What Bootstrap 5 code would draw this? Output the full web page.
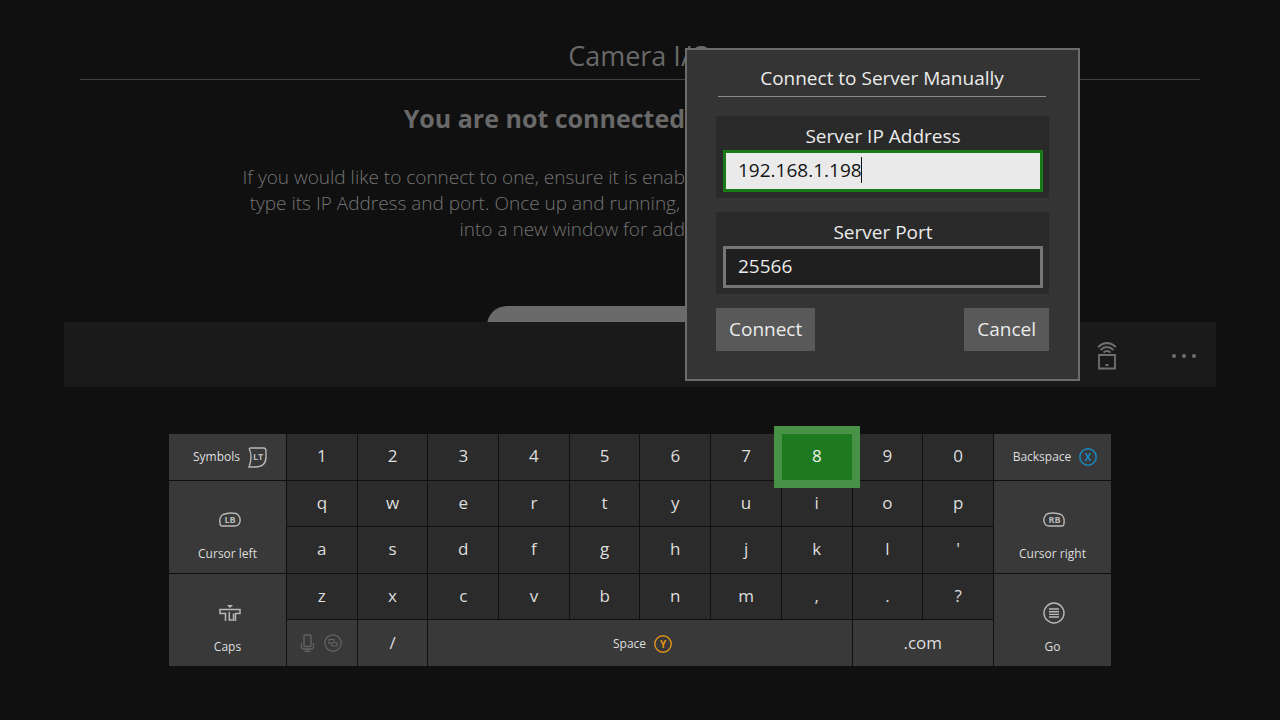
<!DOCTYPE html>
<html lang="en">
<head>
<meta charset="utf-8">
<meta name="viewport" content="width=device-width, initial-scale=1">
<title>Camera I/O</title>
<link href="https://cdn.jsdelivr.net/npm/bootstrap@5.3.0/dist/css/bootstrap.min.css" rel="stylesheet">
<style>
body{background:#101010;color:#696969;font-family:"Open Sans","Noto Sans",sans-serif;min-height:100vh}
.page-head{margin:0 80px;padding-top:36px;height:80px;border-bottom:1px solid #404040}
.page-head h1{font-size:27px;line-height:40px}
/* the text column stops at the dialog's left edge: 200px + 395px */
.intro{padding:21px 595px 0 0}
.intro h2{font-size:25px;line-height:34px;font-weight:700;color:#696969}
.intro p{font-size:19px;line-height:26px;font-weight:300;margin:29px 0 0;color:#747474}
.peek{height:16px;margin-top:64px}
.pill{width:306px;height:44px;background:#6a6a6a;border-radius:20px;border:0}
.tray{margin:0 64px;height:65px;background:#1a1a1a;color:#707070;padding:2px 18px 0 32px;gap:52px}
.tray button{background:none;border:0;padding:0;color:inherit;line-height:0}
.dialog-box{top:48px;right:200px;width:395px;background:#343434;border:2px solid #6c6c6c;padding:10px 29px 28px;color:#ebebeb;font-size:19px}
.dialog-box h2{font-size:19px;line-height:36px;margin:0 3px 19px 2px;border-bottom:1px solid #8a8a8a}
.field{background:#2a2a2a;padding:7px 6px 6px 7px;margin-bottom:14px}
.field label{display:block;text-align:center;line-height:27px}
.field input{display:block;width:100%;height:42px;border:3px solid #767676;border-radius:0;background:#1f1f1f;color:#ebebeb;padding:0 13px 2px 12px;outline:0;line-height:30px}
.field input.active-box{background:#eaeaea;border-color:#1a7a1a;color:#151515;caret-color:transparent}
.caret-bar{left:138px;top:7px;width:1px;height:26px;background:#111}
.dialog-box button{background:#595959;color:#ebebeb;border:0;height:43px;padding:0 13px}
.keyboard{display:grid;grid-template-columns:117px repeat(10,1fr) 117px;grid-template-rows:repeat(5,1fr);gap:1px;max-width:942px;height:232px;margin:47px auto 0}
.keyboard button{background:#2b2b2b;color:#dedede;border:0;padding:0 0 1px;font-size:17px;line-height:22px;min-width:0}
.keyboard .fn-key{background:#393939}
.keyboard .label-key{font-size:12px;padding:1px 0 0 5px}
.keyboard .tall-key{grid-row:span 2;padding:20px 0 0;gap:12px}
.keyboard .wide-key{grid-column:span 6}
.keyboard .dual-key{grid-column:span 2}
.keyboard .picked{background:#1e7a1e;box-shadow:0 0 0 8px #479247;z-index:1;color:#f0f0f0}
.key-icon{color:#b8b8b8}
.faint{opacity:.25}
svg{fill:none;stroke:currentColor;flex:none}
svg text{stroke:none;fill:currentColor;font-weight:700}
</style>
</head>
<body>
<header class="page-head text-center"><h1 class="m-0 fw-normal">Camera I/O</h1></header>
<main>
<section class="intro text-end">
<h2 class="m-0">You are not connected</h2>
<p>If you would like to connect to one, ensure it is enab<br>type its IP Address and port. Once up and running,&nbsp;<br>into a new window for add</p>
</section>
<div class="peek overflow-hidden text-center"><button class="pill" type="button" aria-label="Connect"></button></div>
<div class="tray d-flex justify-content-end align-items-center">
<button type="button" aria-label="Device"><svg width="22" height="30" viewBox="0 0 22 30" stroke-width="1.800"><path d="M3 14h16v13.500H3zM9.500 24h3"/><path d="M2 6Q11-2 20 6M4.500 9Q11 3 17.500 9M7.500 11.500Q11 8.500 14.500 11.500"/></svg></button>
<button type="button" aria-label="More"><svg width="28" height="6" viewBox="0 0 28 6"><g fill="currentColor" stroke="none"><circle cx="4" cy="3" r="2"/><circle cx="14" cy="3" r="2"/><circle cx="24" cy="3" r="2"/></g></svg></button>
</div>
<div class="keyboard">
<button class="fn-key label-key d-flex align-items-center justify-content-center gap-2"><span>Symbols</span><svg class="key-icon" width="19" height="21" viewBox="0 0 19 21" stroke-width="1.400"><path d="M2.500 1H15.500Q18 1 18 4V10Q18 20 7 20H1Q3 15 3 10 3 5 1.200 2Q1.500 1 2.500 1z"/><text x="5" y="13" font-size="9">LT</text></svg></button>
<button>1</button><button>2</button><button>3</button><button>4</button><button>5</button><button>6</button><button>7</button><button class="picked position-relative">8</button><button>9</button><button>0</button>
<button class="fn-key label-key d-flex align-items-center justify-content-center gap-2"><span>Backspace</span><svg width="18" height="18" viewBox="0 0 18 18" color="#168bc4" stroke-width="1.400"><circle cx="9" cy="9" r="8.200"/><text x="9" y="12.500" font-size="10" text-anchor="middle">X</text></svg></button>
<button class="fn-key label-key tall-key d-flex flex-column align-items-center justify-content-center"><svg width="22" height="22" viewBox="0 -3 22 22" stroke-width="1.400" class="key-icon ms-1"><path d="M1 11.500Q0 5 4 2.500Q10 0 17 1.500Q19 2 20.500 5Q22 9 20 12Q19 14 16 14H3Q1.200 14 1 11.500z"/><text x="11" y="11" font-size="9" text-anchor="middle">LB</text></svg><span>Cursor left</span></button>
<button>q</button><button>w</button><button>e</button><button>r</button><button>t</button><button>y</button><button>u</button><button>i</button><button>o</button><button>p</button>
<button class="fn-key label-key tall-key d-flex flex-column align-items-center justify-content-center"><svg width="22" height="22" viewBox="0 -3 22 22" stroke-width="1.400" class="key-icon ms-1"><path d="M21 11.500Q22 5 18 2.500Q12 0 5 1.500Q3 2 1.500 5Q0 9 2 12Q3 14 6 14H19Q20.800 14 21 11.500z"/><text x="11.500" y="11" font-size="9" text-anchor="middle">RB</text></svg><span>Cursor right</span></button>
<button>a</button><button>s</button><button>d</button><button>f</button><button>g</button><button>h</button><button>j</button><button>k</button><button>l</button><button>'</button>
<button class="fn-key label-key tall-key d-flex flex-column align-items-center justify-content-center"><svg width="22" height="22" viewBox="0 -2 22 22" stroke-width="1.500" class="key-icon ms-1"><path d="M6.500 17V9.500H1V5.500H21V9.500H16.500V17M10.300 8V16H13.500M14.500 17V9.500"/><path d="M8 1h6l-3 3z" fill="currentColor" stroke="none"/></svg><span>Caps</span></button>
<button>z</button><button>x</button><button>c</button><button>v</button><button>b</button><button>n</button><button>m</button><button>,</button><button>.</button><button>?</button>
<button class="fn-key label-key tall-key d-flex flex-column align-items-center justify-content-center"><svg width="22" height="22" viewBox="0 0 22 22" stroke-width="1.400" class="key-icon ms-1"><circle cx="11" cy="11" r="10"/><path d="M6 7h10M6 9.700h10M6 12.400h10M6 15h10"/></svg><span>Go</span></button>
<button class="fn-key d-flex align-items-center justify-content-center pe-1" aria-label="Voice and view"><svg class="faint me-2" width="18" height="18" viewBox="0 0 18 18" stroke-width="1.300"><rect x="6" y="1" width="7" height="11.500" rx="1"/><path d="M3.500 9v3.500q0 2.500 2.500 2.500h7q2.500 0 2.500-2.500V9M9.500 15v2.300M6.500 17.300h6"/></svg><svg class="faint" width="18" height="18" viewBox="0 0 18 18" stroke-width="1.200"><circle cx="9" cy="9" r="8.200"/><path d="M7 9.500H5v-4h5v2M8 8.500h5v3.500H8z"/></svg></button>
<button class="fn-key">/</button>
<button class="fn-key label-key wide-key d-flex align-items-center justify-content-center gap-2"><span>Space</span><svg width="18" height="18" viewBox="0 0 18 18" color="#e0931c" stroke-width="1.400"><circle cx="9" cy="9" r="8.200"/><text x="9" y="12.500" font-size="10" text-anchor="middle">Y</text></svg></button>
<button class="fn-key dual-key">.com</button>
</div>
</main>
<form class="dialog-box position-absolute" role="dialog" aria-labelledby="dialog-title">
<h2 id="dialog-title" class="text-center fw-normal">Connect to Server Manually</h2>
<div class="field"><label for="ip">Server IP Address</label><div class="position-relative"><input id="ip" class="active-box" type="text" value="192.168.1.198"><span class="caret-bar position-absolute"></span></div></div>
<div class="field"><label for="port">Server Port</label><input id="port" type="text" value="25566"></div>
<div class="d-flex justify-content-between"><button type="button">Connect</button><button type="button">Cancel</button></div>
</form>
<script src="https://cdn.jsdelivr.net/npm/bootstrap@5.3.0/dist/js/bootstrap.bundle.min.js"></script>
</body>
</html>
